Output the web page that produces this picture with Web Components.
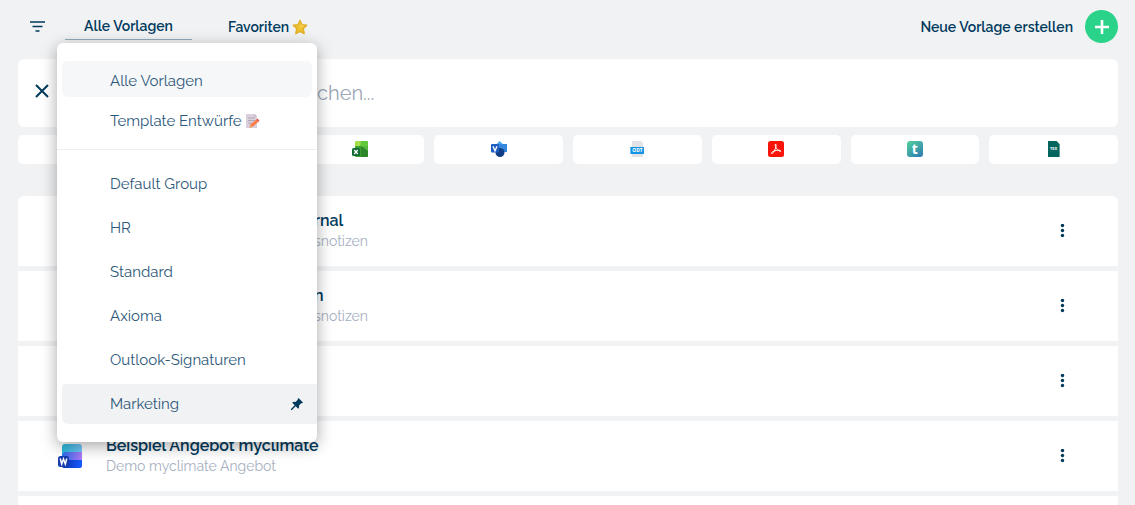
<!DOCTYPE html>
<html lang="de">
<head>
<meta charset="utf-8">
<title>Vorlagen</title>
<style>
html,body{margin:0;height:100%}
body{background:#f1f2f4;color:#003a5d;font-family:Raleway,Lato,"Noto Sans",sans-serif;overflow:hidden}
</style>
</head>
<body>
<template-app></template-app>
<script>
const base='<style>*{box-sizing:border-box}button,a,input{font:inherit;color:inherit}button{border:0;background:none;padding:0;cursor:pointer}svg{display:block}';
const define=(name,html)=>customElements.define(name,class extends HTMLElement{
  constructor(){super();this.attachShadow({mode:'open'}).innerHTML=base+html}
});

const icons={
filter:['0 0 16 12','<path d="M0 1h15M2.500 5.500h10M5.500 10h4" stroke="#003a5d" stroke-width="1.700"/>'],
close:['0 0 14 14','<path d="M1 1l12 12M13 1L1 13" stroke="#003a5d" stroke-width="2"/>'],
plus:['0 0 14 14','<path d="M7 0v14M0 7h14" stroke="#fff" stroke-width="2.600"/>'],
dots:['0 0 14 14','<g fill="#003a5d"><circle cx="6.500" cy="1.500" r="1.700"/><circle cx="6.500" cy="6.500" r="1.700"/><circle cx="6.500" cy="11.500" r="1.700"/></g>'],
star:['0 0 16 16','<path d="M8 1.500l2 4.300 4.700.5-3.500 3.300 1 5L8 12.300l-4.200 2.300 1-5-3.500-3.300 4.700-.5z" fill="#edc12f" stroke="#e0b02c" stroke-width="1.500" stroke-linejoin="round"/><path d="M8 3l1 3 3 .8-3.500 1.700z" fill="#f7d75b"/>'],
memo:['0 0 14 14','<path d="M0 0h8.500L11 2.500V14H0z" fill="#d9d0dc"/><path d="M8.500 0v2.500H11z" fill="#b9aebe"/><path d="M2 4h7M2 6.500h7M2 9h4" stroke="#b3a7b8"/><path d="M4.500 10.500l6-5 2 2.300-6 5-3 .9z" fill="#ff7b45"/><path d="M10.500 5.500l1-.9 2 2.300-1 .9z" fill="#e8403b"/><path d="M4.500 10.500l2 2.300-3 .9z" fill="#e3a05e"/>'],
pin:['0 0 12 12','<path d="M7.500 0L12 4.500l-1 .8-.8-.1L8 7.500c.4 1.300 0 2.500-.8 3.300L4.700 8.300 1 12H0v-1l3.700-3.700L1.200 4.800C2 4 3.200 3.600 4.500 4l2.300-2.200L6.700 1z" fill="#003a5d"/>'],
excel:['0 0 16 16','<path d="M3 1q0-1 1-1h11q1 0 1 1v5H3z" fill="#a4e04a"/><path d="M9 0h6q1 0 1 1v4H8z" fill="#62c83c"/><path d="M3 6q0-1 1-1h12v10q0 1-1 1H4q-1 0-1-1z" fill="#3aa02e"/><path d="M9 6h7v9l-1 1H9z" fill="#2e8429"/><path d="M9 5l7 5V5z" fill="#55b83b"/><rect y="7" width="8" height="8" rx="1.500" fill="#116b35"/><path d="M2.200 9l3.600 4M5.800 9l-3.600 4" stroke="#fff" stroke-width="1.300"/>'],
visio:['0 0 16 16','<path d="M8.500 0L14 5 8.500 10 4 5z" fill="#48a6ef"/><path d="M8 3h8v8H8z" fill="#3587df"/><circle cx="9" cy="11.500" r="4.500" fill="#113d87"/><rect y="3" width="8" height="8.500" rx="1" fill="#1f5fc2"/><path d="M2 5.200l2 4.600 2-4.600" fill="none" stroke="#fff" stroke-width="1.300"/>'],
pdf:['0 0 16 16','<rect width="16" height="16" rx="2.500" fill="#fb1409"/><path d="M7.500 3c-1 1.500.7 5.800 4.800 7.500 1.200-.3.300-1.500-2.300-1.300-2.500.1-5.200 1.200-6.400 2.400-.8 1.200.8 1.400 2-.5C7 8.800 9.200 4.500 7.500 3z" fill="none" stroke="#fff" stroke-width="1"/>'],
word:['0 0 24 25','<defs><linearGradient id="a"><stop stop-color="#28b8d9"/><stop offset="1" stop-color="#75c8fa"/></linearGradient><linearGradient id="b"><stop stop-color="#286be9"/><stop offset="1" stop-color="#ad7af5"/></linearGradient><linearGradient id="c"><stop stop-color="#0a2fae"/><stop offset="1" stop-color="#195cff"/></linearGradient></defs><rect x="4" width="20" height="13" rx="3" fill="url(#a)"/><path d="M4 12c0-3 2-4 5-4h15v10H4z" fill="url(#b)"/><path d="M4 19c0-2 1-3 4-3h16v6q0 2-2 2H6q-2 0-2-2z" fill="url(#c)"/><rect y="12" width="11" height="11" rx="2.500" fill="#173caf"/><path d="M2.200 14.500l1.500 5.500 1.800-5 1.800 5 1.500-5.500" fill="none" stroke="#fff" stroke-width="1.500"/>']
};
customElements.define('ui-icon',class extends HTMLElement{
  constructor(){super();const [box,art]=icons[this.getAttribute('name')];
    this.attachShadow({mode:'open'}).innerHTML=`<style>:host{display:block;flex:none;width:16px;height:16px}svg{display:block;width:100%;height:100%}</style><svg viewBox="${box}" fill="none" aria-hidden="true">${art}</svg>`}
});

define('file-badge',`
:host{display:flex;width:16px;height:16px;align-items:center;justify-content:center;color:#fff;font:700 4px/1 "Noto Sans",sans-serif}
span{display:flex;align-items:center;justify-content:center;width:12px;height:16px;background:#04655f;clip-path:polygon(0 0,75% 0,100% 20%,100% 100%,0 100%)}
:host([kind=odt]) span{background:linear-gradient(#1495e4,#1495e4) 0 6px/14px 7px no-repeat,linear-gradient(#e1e3e6,#e1e3e6) 2px 0/11px 16px no-repeat;clip-path:polygon(0 0,75% 0,100% 20%,100% 100%,0 100%);width:14px;font-size:5px;padding-top:3px}
:host([kind=t]) span{width:16px;border-radius:3px;clip-path:none;background:linear-gradient(145deg,#53d39b,#2d78b4);font-size:14px}
</style><span><slot></slot></span>`);

define('menu-item',`
:host{display:block}
button{display:flex;align-items:center;width:100%;height:40px;padding:0 14px 0 48px;gap:4px;font-size:15px;line-height:20px;text-align:left;color:#2d587a}
:host([selected]) button{background:#f6f7f8;clip-path:inset(0 0 4px round 6px)}
:host([hovered]) button{background:#f1f2f4;border-radius:3px 0 0 6px}
::slotted([name=pin]){margin-left:auto;width:12px;height:12px}
::slotted([name=memo]){width:14px;height:14px}
</style><button type="button"><slot></slot></button>`);

define('group-menu',`
:host{display:block;width:260px;padding:18px 0;background:#fff;border-radius:6px;box-shadow:0 4px 16px rgba(0,0,0,.35)}
nav{display:flex;flex-direction:column}
.top{padding:0 5px 8px;border-bottom:1px solid #edeff1}
.groups{gap:4px;padding:14px 0 0 5px}
</style>
<nav class="top" aria-label="Ansichten"><menu-item selected>Alle Vorlagen</menu-item><menu-item>Template Entwürfe <ui-icon name="memo"></ui-icon></menu-item></nav>
<nav class="groups" aria-label="Gruppen"><menu-item>Default Group</menu-item><menu-item>HR</menu-item><menu-item>Standard</menu-item><menu-item>Axioma</menu-item><menu-item>Outlook-Signaturen</menu-item><menu-item hovered>Marketing<ui-icon name="pin"></ui-icon></menu-item></nav>`);

define('top-bar',`
:host{display:flex;height:59px;padding:0 0 6px;align-items:center;font-weight:600;font-size:14px;line-height:20px}
.filter{padding:0 12px;margin-right:7px}
.tab{position:relative}
.tab>a{display:flex;align-items:center;justify-content:center;width:127px;height:27px;border-bottom:1px solid #8fa9ba;text-decoration:none}
group-menu{position:absolute;z-index:2;top:30px;left:-8px;font-weight:400}
.fav{display:flex;align-items:center;gap:3px;margin-left:36px;text-decoration:none}
.new{display:flex;align-items:center;gap:12px;margin-left:auto}
.new span{display:grid;place-items:center;width:33px;height:33px;border-radius:50%;background:#2bd38a}
.new ui-icon{width:14px;height:14px}
</style>
<button class="filter" aria-label="Filter"><ui-icon name="filter"></ui-icon></button>
<div class="tab"><a href="#alle">Alle Vorlagen</a><group-menu></group-menu></div>
<a class="fav" href="#favoriten">Favoriten <ui-icon name="star"></ui-icon></a>
<button class="new">Neue Vorlage erstellen <span><ui-icon name="plus"></ui-icon></span></button>`);

define('search-box',`
:host{display:flex;align-items:center;height:68px;padding:0 17px;background:#fff;border-radius:6px}
button{width:14px;padding-bottom:4px}
button ui-icon{width:14px;height:14px}
input{flex:1;min-width:0;border:0;outline:0;padding:0 0 0 268px;background:none;font-size:20px;line-height:28px}
input::placeholder{color:#9ca7b7;opacity:1}
</style>
<button aria-label="Suche leeren"><ui-icon name="close"></ui-icon></button><input type="text" aria-label="Suche" placeholder="chen...">`);

define('type-filter',`
:host{display:grid;grid-template-columns:repeat(8,1fr);gap:10px;margin-top:8px}
button{display:grid;place-items:center;height:29px;padding-bottom:1px;background:#fff;border-radius:5px}
</style>
<button aria-label="Word"></button><button aria-label="PowerPoint"></button>
<button aria-label="Excel"><ui-icon name="excel"></ui-icon></button>
<button aria-label="Visio"><ui-icon name="visio"></ui-icon></button>
<button><file-badge kind="odt">ODT</file-badge></button>
<button aria-label="PDF"><ui-icon name="pdf"></ui-icon></button>
<button><file-badge kind="t">t</file-badge></button>
<button><file-badge>TEX</file-badge></button>`);

define('template-row',`
:host{display:flex;align-items:center;height:70px;padding:0 48px 0 40px;background:#fff}
:host(:first-child){border-radius:6px 6px 0 0}
ui-icon[name=word]{width:24px;height:25px;margin-right:24px}
.copy{flex:1;white-space:nowrap}
:host([inset]) .copy{padding-left:208px}
.title{min-height:20px;font-weight:600;font-size:16px;line-height:20px}
.sub{min-height:20px;font-size:14px;line-height:20px;color:#a6b0bf}
button ui-icon{width:14px;height:14px}
</style>
<ui-icon name="word"></ui-icon><div class="copy"><div class="title"><slot></slot></div><div class="sub"><slot name="sub"></slot></div></div><button aria-label="Aktionen"><ui-icon name="dots"></ui-icon></button>`);

define('template-app',`
:host{display:block;height:100%;overflow:hidden;padding:0 17px 0 18px;box-sizing:border-box}
.list{display:flex;flex-direction:column;gap:5px;margin-top:32px}
</style>
<top-bar></top-bar><search-box></search-box><type-filter></type-filter>
<div class="list">
<template-row inset>rnal<span slot="sub">snotizen</span></template-row>
<template-row inset>n<span slot="sub">snotizen</span></template-row>
<template-row></template-row>
<template-row>Beispiel Angebot myclimate<span slot="sub">Demo myclimate Angebot</span></template-row>
<template-row></template-row>
</div>`);
</script>
</body>
</html>
